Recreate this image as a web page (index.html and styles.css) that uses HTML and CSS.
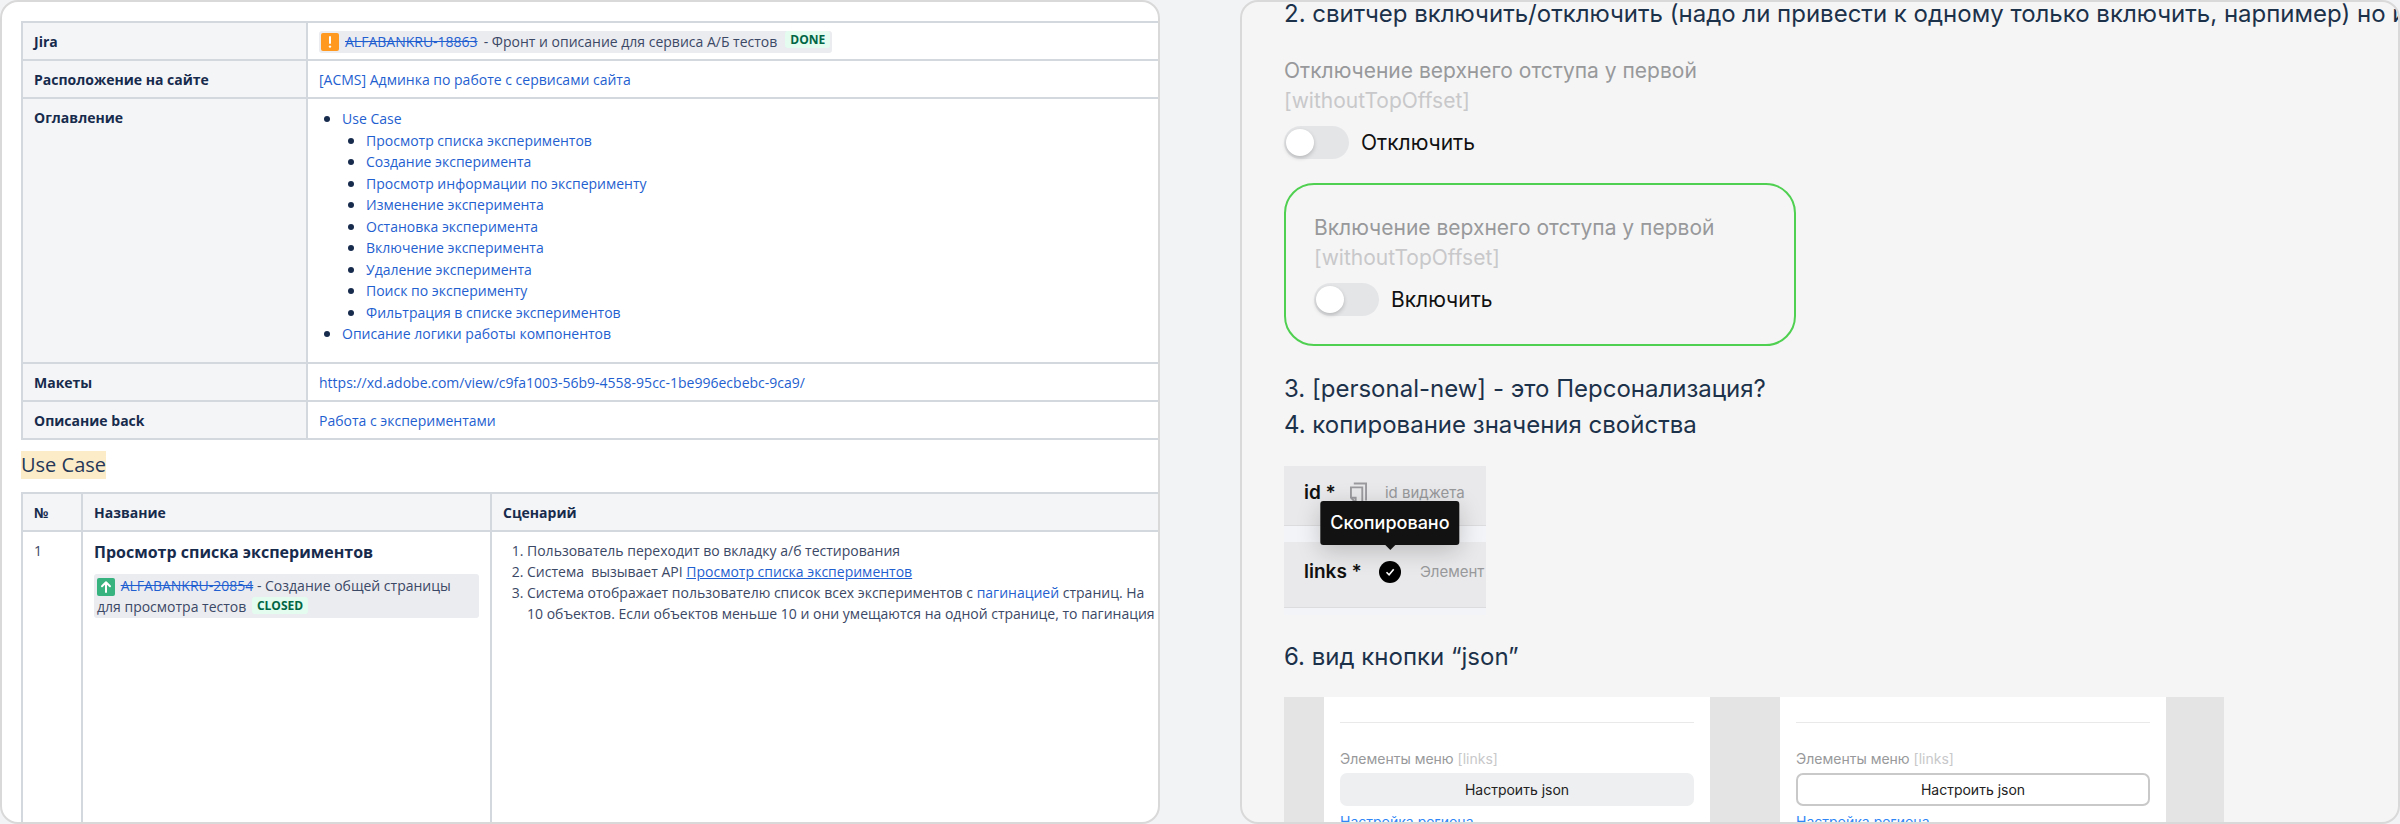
FILE: index.html
```html
<!DOCTYPE html>
<html lang="ru">
<head>
<meta charset="utf-8">
<title>Сервис А/Б тестов</title>
<link rel="stylesheet" href="styles.css">
</head>
<body>
<main class="board">
  <section class="panel panel-docs">
    <table class="doc-table">
      <colgroup><col class="col-key"><col></colgroup>
      <tbody>
        <tr>
          <th scope="row">Jira</th>
          <td>
            <span class="issue issue-line">
              <svg class="issue-icon" viewBox="0 0 18 18" aria-hidden="true"><rect width="18" height="18" rx="2" fill="#ff991f"/><path d="M9 4v6" stroke="#fff" stroke-width="2" stroke-linecap="round"/><circle cx="9" cy="13.6" r="1.2" fill="#fff"/></svg>
              <a class="issue-key" href="#">ALFABANKRU-18863</a>
              <span>- Фронт и описание для сервиса А/Б тестов</span>
              <span class="status">DONE</span>
            </span>
          </td>
        </tr>
        <tr>
          <th scope="row">Расположение на сайте</th>
          <td><a href="#">[ACMS] Админка по работе с сервисами сайта</a></td>
        </tr>
        <tr>
          <th scope="row">Оглавление</th>
          <td>
            <ul class="toc">
              <li><a href="#use-case">Use Case</a>
                <ul>
                  <li><a href="#">Просмотр списка экспериментов</a></li>
                  <li><a href="#">Создание эксперимента</a></li>
                  <li><a href="#">Просмотр информации по эксперименту</a></li>
                  <li><a href="#">Изменение эксперимента</a></li>
                  <li><a href="#">Остановка эксперимента</a></li>
                  <li><a href="#">Включение эксперимента</a></li>
                  <li><a href="#">Удаление эксперимента</a></li>
                  <li><a href="#">Поиск по эксперименту</a></li>
                  <li><a href="#">Фильтрация в списке экспериментов</a></li>
                </ul>
              </li>
              <li><a href="#">Описание логики работы компонентов</a></li>
            </ul>
          </td>
        </tr>
        <tr>
          <th scope="row">Макеты</th>
          <td><a href="#">https://xd.adobe.com/view/c9fa1003-56b9-4558-95cc-1be996ecbebc-9ca9/</a></td>
        </tr>
        <tr>
          <th scope="row">Описание back</th>
          <td><a href="#">Работа с экспериментами</a></td>
        </tr>
      </tbody>
    </table>

    <h2 class="doc-title" id="use-case"><mark>Use Case</mark></h2>

    <table class="doc-table">
      <colgroup><col class="col-num"><col class="col-name"><col></colgroup>
      <thead>
        <tr><th scope="col">№</th><th scope="col">Название</th><th scope="col">Сценарий</th></tr>
      </thead>
      <tbody>
        <tr class="case-row">
          <td>1</td>
          <td>
            <h3 class="case-title">Просмотр списка экспериментов</h3>
            <div class="issue issue-block">
              <svg class="issue-icon" viewBox="0 0 18 18" aria-hidden="true"><rect width="18" height="18" rx="2" fill="#36b37e"/><path d="M9 14V4.5M5 8.2l4-4 4 4" fill="none" stroke="#fff" stroke-width="2" stroke-linecap="round" stroke-linejoin="round"/></svg>
              <a class="issue-key" href="#">ALFABANKRU-20854</a> - Создание общей страницы для просмотра тестов <span class="status">CLOSED</span>
            </div>
          </td>
          <td>
            <ol class="steps">
              <li>Пользователь переходит во вкладку а/б тестирования</li>
              <li>Система&nbsp; вызывает API <a class="underlined" href="#">Просмотр списка экспериментов</a></li>
              <li>Система отображает пользователю список всех экспериментов с <a href="#">пагинацией</a> страниц. На<br>10 объектов. Если объектов меньше 10 и они умещаются на одной странице, то пагинация</li>
            </ol>
          </td>
        </tr>
      </tbody>
    </table>
  </section>

  <section class="panel panel-notes">
    <p class="note note-first">2. свитчер включить/отключить (надо ли привести к одному только включить, нарпимер) но и</p>

    <div class="setting">
      <p class="setting-name">Отключение верхнего отступа у первой<br><span class="setting-code">[withoutTopOffset]</span></p>
      <label class="switch"><input type="checkbox"><span>Отключить</span></label>
    </div>

    <div class="setting setting-chosen">
      <p class="setting-name">Включение верхнего отступа у первой<br><span class="setting-code">[withoutTopOffset]</span></p>
      <label class="switch"><input type="checkbox"><span>Включить</span></label>
    </div>

    <p class="note">3. [personal-new] - это Персонализация?</p>
    <p class="note">4. копирование значения свойства</p>

    <div class="props">
      <div class="prop">
        <b>id *</b>
        <svg class="copy-icon" viewBox="0 0 18 22" fill="none" stroke="#9b9b9f" stroke-width="2" aria-hidden="true"><path d="M4 1h13v18"/><path d="M1 5h12v16H6l-5-5z"/><path d="M1 16h5v5"/></svg>
        <span class="prop-hint">id виджета</span>
      </div>
      <div class="prop">
        <b>links *</b>
        <span class="check">
          <svg viewBox="0 0 22 22" aria-hidden="true"><circle cx="11" cy="11" r="11" fill="#000"/><path d="M7.5 11.2l2.6 2.6 4.6-5.6" fill="none" stroke="#fff" stroke-width="1.6"/></svg>
          <span class="tooltip" role="tooltip">Скопировано</span>
        </span>
        <span class="prop-hint">Элемент</span>
      </div>
    </div>

    <p class="note">6. вид кнопки “json”</p>

    <div class="variants">
      <div class="variant">
        <p class="variant-name">Элементы меню <span class="setting-code">[links]</span></p>
        <button class="btn btn-filled" type="button">Настроить json</button>
        <a class="region" href="#">Настройка региона</a>
      </div>
      <div class="variant">
        <p class="variant-name">Элементы меню <span class="setting-code">[links]</span></p>
        <button class="btn btn-outline" type="button">Настроить json</button>
        <a class="region" href="#">Настройка региона</a>
      </div>
    </div>
  </section>
</main>
</body>
</html>
```
FILE: styles.css
```css
* { box-sizing: border-box; }

body {
  margin: 0;
  background: #f2f3f5;
}

p, h2, h3, ul, ol { margin: 0; }

.board {
  display: grid;
  grid-template-columns: repeat(2, minmax(0, 1fr));
  gap: 80px;
  height: 100vh;
}

.panel {
  min-height: 0;
  overflow: hidden;
  border: 2px solid #d9d9d9;
  border-radius: 18px;
}

/* Documentation panel */

.panel-docs {
  padding: 19px 0 0 19px;
  background: #fff;
  color: #3b4866;
  font: 14px/22px "Open Sans", "Noto Sans", sans-serif;
}

.panel-docs a {
  color: #1f5fd0;
  text-decoration: none;
}

/* Wider than the panel, so the right edge runs out of view */
.doc-table {
  width: 110%;
  table-layout: fixed;
  border-collapse: collapse;
}

.doc-table th,
.doc-table td {
  padding: 8px 11px 6px;
  border: 2px solid #d3d8df;
  text-align: left;
  vertical-align: top;
  white-space: nowrap;
}

.doc-table th {
  background: #f4f5f7;
  color: #172b4d;
  font-weight: 700;
}

.col-key { width: 285px; }
.col-num { width: 60px; }
.col-name { width: 409px; }

.issue {
  border-radius: 3px;
  background: #ebecf0;
}

.issue-line {
  display: inline-flex;
  align-items: center;
  gap: 6px;
  padding: 0 2px;
  vertical-align: top;
}

.issue-block {
  padding: 1px 3px;
  line-height: 21px;
  white-space: normal;
}

.issue-icon {
  width: 18px;
  height: 18px;
}

.issue-block .issue-icon {
  margin-right: 2px;
  vertical-align: middle;
}

.panel-docs .issue-key { text-decoration: line-through; }

.status {
  display: inline-block;
  margin-left: 2px;
  padding: 0 5px;
  border-radius: 3px;
  background: #e3fcef;
  color: #006644;
  font-size: 12px;
  font-weight: 700;
  line-height: 17px;
  vertical-align: 2px;
}

.issue-line .status { align-self: flex-start; }

.toc,
.toc ul {
  padding-left: 24px;
  line-height: 21px;
  list-style: disc;
}

.toc { padding: 1px 0 12px 23px; }
.toc ul li:nth-child(odd) { padding-top: 1px; }
.toc li::marker { color: #172b4d; font-size: 16px; }

.doc-title {
  margin: 11px 0 13px;
  color: #253858;
  font-size: 20px;
  font-weight: 400;
  line-height: 28px;
}

.doc-title mark {
  display: inline-block;
  background: #fdecc8;
  color: inherit;
}

.doc-table .case-row td {
  height: 340px;
}

.case-title {
  margin-bottom: 10px;
  color: #172b4d;
  font-size: 16px;
  line-height: 24px;
}

.steps {
  padding-left: 24px;
  line-height: 21px;
}

.panel-docs .underlined { text-decoration: underline; }

/* Notes panel */

.panel-notes {
  padding-left: 42px;
  background: #f5f5f5;
  color: #1c314a;
  font: 24px/36px Inter, Roboto, sans-serif;
}

.note { white-space: nowrap; }

.note-first { line-height: 24px; }

.setting {
  display: flex;
  flex-direction: column;
  gap: 10px;
  margin-top: 30px;
}

.setting-chosen {
  width: 46%;
  min-width: 480px;
  margin: 24px 0 25px;
  padding: 28px;
  border: 2px solid #4fd050;
  border-radius: 30px;
}

.setting-name {
  color: #98999b;
  font-size: 21px;
  line-height: 30px;
}

.setting-code { color: #c8c8ca; }

.switch {
  display: flex;
  align-items: center;
  gap: 12px;
  color: #111;
  font-size: 21px;
  line-height: 32px;
}

.switch input {
  width: 65px;
  height: 33px;
  margin: 0;
  padding: 3px 2px;
  border-radius: 17px;
  background: #e4e5e7;
  appearance: none;
}

.switch input::before {
  content: "";
  display: block;
  width: 28px;
  height: 27px;
  border-radius: 50%;
  background: #fff;
  box-shadow: 0 2px 4px rgba(0, 0, 0, .2);
}

.switch input:checked { padding-left: 35px; background: #4fd050; }

.props {
  display: flex;
  flex-direction: column;
  gap: 16px;
  width: 202px;
  margin: 23px 0 24px;
  padding-bottom: 7px;
  overflow: hidden;
  background: #f3f4f7;
}

.prop {
  display: flex;
  align-items: center;
  height: 60px;
  padding: 0 0 5px 20px;
  border-bottom: 1px solid #dcdcdf;
  background: #e9e9eb;
  color: #111;
  font-size: 19px;
  line-height: 24px;
  white-space: nowrap;
}

.prop + .prop { height: 66px; }
.prop b { font-weight: 600; }

.copy-icon {
  width: 17px;
  height: 22px;
  margin: 0 18px 0 14px;
}

.prop-hint {
  color: #98999b;
  font-size: 15px;
}

.check {
  position: relative;
  width: 22px;
  height: 22px;
  margin: 0 19px 0 17px;
}

.check svg { display: block; }

.tooltip {
  position: absolute;
  bottom: 38px;
  left: 50%;
  padding: 10px;
  border-radius: 3px;
  background: #121212;
  box-shadow: 0 6px 24px rgba(0, 0, 0, .2);
  color: #fff;
  font-size: 18px;
  font-weight: 500;
  transform: translateX(-50%);
}

.tooltip::after {
  content: "";
  position: absolute;
  top: 100%;
  left: 50%;
  border: 5px solid transparent;
  border-top-color: #121212;
  transform: translateX(-50%);
}

.variants {
  display: grid;
  grid-template-columns: 1fr 1fr;
  gap: 70px;
  max-width: 940px;
  margin-top: 22px;
  padding: 0 58px 0 40px;
  background: #e4e4e4;
}

.variant {
  display: flex;
  flex-direction: column;
  padding: 25px 16px;
  background: #fff;
  font-size: 14px;
  line-height: 20px;
}

.variant-name {
  padding: 26px 0 4px;
  border-top: 1px solid #e9e9e9;
  color: #98999b;
}

.btn {
  height: 33px;
  border: 0;
  border-radius: 7px;
  background: #eeeff1;
  color: #222;
  font: inherit;
}

.btn-outline {
  border: 2px solid #c9c9c9;
  background: #fff;
}

.region {
  margin-top: 6px;
  color: #2f86f6;
  text-decoration: none;
}
```
